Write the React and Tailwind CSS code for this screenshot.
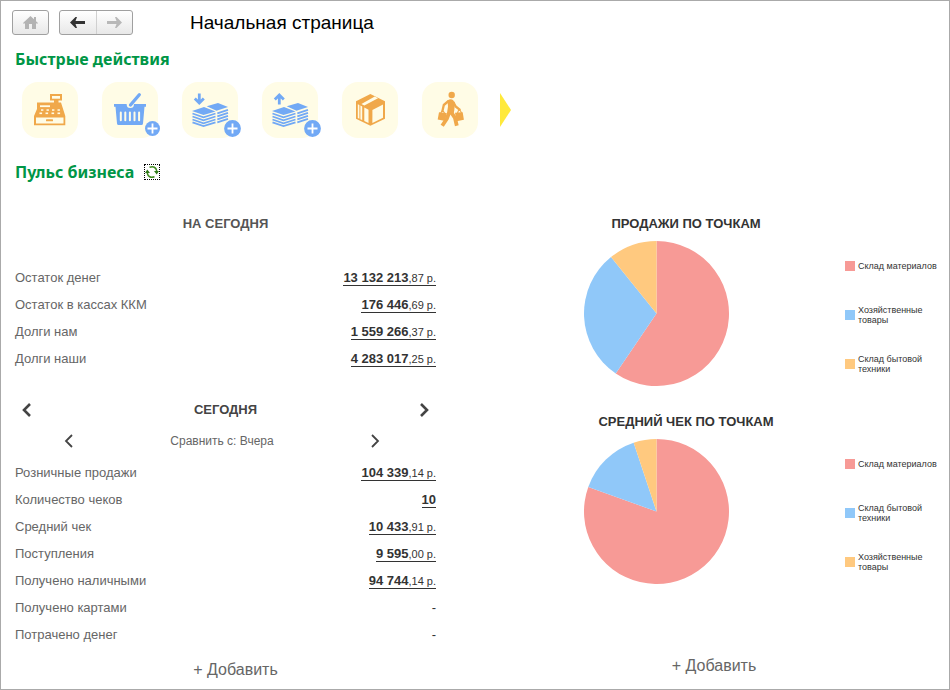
import React from 'react';

// ── Palette ──
const ORANGE = '#f0a84a';
const BLUE = '#72a9f5';
const PALE = '#fffce6';

const SLICE = {
  red: '#f79a96',
  blue: '#90c8f9',
  amber: '#ffc97f',
};

const BALANCES = [
  { label: 'Остаток денег', whole: '13 132 213', cents: ',87 р.' },
  { label: 'Остаток в кассах ККМ', whole: '176 446', cents: ',69 р.' },
  { label: 'Долги нам', whole: '1 559 266', cents: ',37 р.' },
  { label: 'Долги наши', whole: '4 283 017', cents: ',25 р.' },
];

const TODAY = [
  { label: 'Розничные продажи', whole: '104 339', cents: ',14 р.' },
  { label: 'Количество чеков', whole: '10', cents: '' },
  { label: 'Средний чек', whole: '10 433', cents: ',91 р.' },
  { label: 'Поступления', whole: '9 595', cents: ',00 р.' },
  { label: 'Получено наличными', whole: '94 744', cents: ',14 р.' },
  { label: 'Получено картами' },
  { label: 'Потрачено денег' },
];

const SALES = [
  { label: 'Склад материалов', share: 59.5, color: SLICE.red },
  { label: 'Хозяйственные товары', share: 29.7, color: SLICE.blue },
  { label: 'Склад бытовой техники', share: 10.8, color: SLICE.amber },
];

const AVERAGE = [
  { label: 'Склад материалов', share: 80.5, color: SLICE.red },
  { label: 'Склад бытовой техники', share: 14.4, color: SLICE.blue },
  { label: 'Хозяйственные товары', share: 5.1, color: SLICE.amber },
];

// ── Quick action drawings, all on a 56x56 tile ──
function PlusBadge() {
  return (
    <g>
      <circle cx="50.5" cy="46.5" r="7.5" fill={BLUE} />
      <path d="M50.5 41.5v10M45.5 46.5h10" stroke="#fff" strokeWidth="1.8" />
    </g>
  );
}

function RegisterIcon() {
  return (
    <g fill={ORANGE}>
      <path d="M28 12h12v6.500h-3.500v2H39L43.300 34v9.200H12V34l3-7v-6.500h17v-2h-4z" />
      <g fill={PALE}>
        <rect x="30" y="14" width="8" height="2.700" />
        <rect x="18" y="23.300" width="10" height="1.800" />
        <path d="M14 35.500h27.500v6H14z" />
        {[19, 24.5, 30, 35.5].map((x) => <rect key={x} x={x} y="27.300" width="2.400" height="1.500" />)}
        {[17.5, 23.5, 29.5, 35.5].map((x) => <rect key={x} x={x} y="30.500" width="2.600" height="1.600" />)}
      </g>
      <rect x="24" y="37.300" width="7" height="2" rx="0.5" />
    </g>
  );
}

function BasketIcon() {
  return (
    <g>
      <path d="M12 22h32v2.800h-1.500L41 41.500Q40.800 43 39.500 43h-23Q15.200 43 15 41.500L13.500 24.800H12z" fill={BLUE} />
      <circle cx="28.300" cy="22.500" r="3.600" fill={PALE} />
      <path d="M28.500 23L37.300 12.700" stroke={BLUE} strokeWidth="3.300" strokeLinecap="round" />
      <path d="M18.800 30.500v7.800M23.300 30.500v7.800M27.900 30.500v7.800M32.500 30.500v7.800M37.100 30.500v7.800" stroke={PALE} strokeWidth="2" strokeLinecap="round" />
      <PlusBadge />
    </g>
  );
}

function MoneyIcon({ up }) {
  return (
    <g fill="none" stroke={BLUE} strokeWidth="1.800">
      <path d="M10 29l12-4 11.500 4.500L21.500 33z" fill={BLUE} stroke="none" />
      <path d="M24.700 24.200L36 21l10 4-11.500 3.800z" fill={BLUE} stroke="none" />
      <path d="M10.500 31.500L21.500 35.300l12-3.800M10.500 34.500L21.500 38.300l12-3.800M10.500 37.500L21.500 41.300l12-3.800M10.500 40.300L21.500 44.100l12-3.800" />
      <path d="M35.300 31.300L46 27.800M35.300 34.300L46 30.800M35.300 37.300L46 33.800M35.300 40.300L46 36.800" />
      {up
        ? <path d="M17.300 22.500V13.500M12.800 17.500L17.300 13l4.500 4.500" strokeWidth="2.800" />
        : <path d="M17.300 11.500V20.500M12.800 16.500L17.300 21l4.500-4.500" strokeWidth="2.800" />}
      <PlusBadge />
    </g>
  );
}

function BoxIcon() {
  return (
    <g>
      <path d="M28.400 12L43 19.300v17.500l-14.600 7L14 36.800V19.300z" fill={ORANGE} />
      <path d="M30.400 28L41 22.600v13.200L30.400 41z" fill={PALE} />
      <path d="M15.800 22.300l1.600.8v13.600l-1.600-.8zM18.400 23.500l1.800.9v13.700l-1.800-.9z" fill={PALE} />
      <path d="M22.300 25.500l4.200 2.200V41l-4.200-2.100z" fill={PALE} />
      <path d="M32.800 14.500l3.200 1.700-13.700 7.300-2.900-1.500z" fill={PALE} />
    </g>
  );
}

function ShopperIcon() {
  return (
    <g fill={ORANGE}>
      <circle cx="29.700" cy="13" r="3.200" />
      <path d="M25.500 18.500Q28.500 16.500 31 18l2 3-.7 7-.8 4.500h-6.700l1.200-8z" />
      <g fill="none" stroke={ORANGE} strokeLinejoin="round">
        <path d="M26.500 19l-4.700 4-1.600 7" strokeWidth="2.300" />
        <path d="M31.300 20l2.400 4.500 4.600 3.700" strokeWidth="2.300" />
        <path d="M27 31l-2.300 6-4.500 6.700" strokeWidth="3.800" />
        <path d="M29.700 31l3.300 5 1.800 7.700" strokeWidth="3.800" />
        <path d="M18.800 31q1.700-4 3.700 0M35.500 31q1.700-6 4 0" strokeWidth="1.200" />
      </g>
      <path d="M17 30.300l7.700.6-1.500 8-7.500-1.400zM33 30.800l7.700-.5 1.200 7.500-7.400 1.500z" />
    </g>
  );
}

const ACTIONS = [
  { name: 'Касса', icon: <RegisterIcon /> },
  { name: 'Новая продажа', icon: <BasketIcon /> },
  { name: 'Поступление денег', icon: <MoneyIcon /> },
  { name: 'Расход денег', icon: <MoneyIcon up /> },
  { name: 'Товары', icon: <BoxIcon /> },
  { name: 'Покупатели', icon: <ShopperIcon /> },
];

function Chevron({ left, thin, label }) {
  return (
    <button type="button" aria-label={label} className="flex w-4 h-5 items-center justify-center text-[#444]">
      <svg width="10" height="14" viewBox="0 0 10 14" fill="none" stroke="currentColor" strokeWidth={thin ? 1.8 : 2.6}>
        <path d={left ? 'M8 1L2 7l6 6' : 'M2 1l6 6-6 6'} />
      </svg>
    </button>
  );
}

function Metrics({ rows }) {
  return (
    <table className="w-full text-[13px] leading-4">
      <tbody>
        {rows.map((r) => (
          <tr key={r.label} className="h-[27px]">
            <th scope="row" className="p-0 text-left font-normal text-[#666]">{r.label}</th>
            <td className="p-0 text-right text-[#333]">
              {r.whole ? (
                <a href="#" className="inline-block border-b border-[#333] text-[11px] leading-[13px]">
                  <b className="text-[13px]">{r.whole}</b>{r.cents}
                </a>
              ) : '-'}
            </td>
          </tr>
        ))}
      </tbody>
    </table>
  );
}

function Pie({ data }) {
  const point = (pct) => {
    const a = (pct / 100) * Math.PI * 2;
    return `${72.5 + 72.5 * Math.sin(a)} ${72.5 - 72.5 * Math.cos(a)}`;
  };
  let start = 0;
  return (
    <svg width="145" height="145" viewBox="0 0 145 145" className="shrink-0">
      {data.map((d) => {
        const from = start;
        start += d.share;
        return (
          <path key={d.label} fill={d.color}
            d={`M72.5 72.5L${point(from)}A72.5 72.5 0 ${d.share > 50 ? 1 : 0} 1 ${point(start)}Z`} />
        );
      })}
    </svg>
  );
}

function ChartPanel({ title, data }) {
  return (
    <section>
      <h3 className="mb-[9px] pr-[150px] text-center text-[13px] leading-4 font-bold text-[#333]">{title}</h3>
      <div className="flex justify-between">
        <Pie data={data} />
        <ul className="flex w-[93px] flex-col text-[9px] leading-[10px] text-[#333]">
          {data.map((d) => (
            <li key={d.label} className="flex h-[49px] items-center gap-[3px]">
              <span className="size-[10px] shrink-0" style={{ background: d.color }} />
              <span>{d.label}</span>
            </li>
          ))}
        </ul>
      </div>
    </section>
  );
}

export default function App() {
  return (
    <div className="min-h-screen border border-[#aaa] bg-white font-['Liberation_Sans',Arial,sans-serif]">
      {/* Toolbar */}
      <header className="flex items-center pt-[9px] pl-[11px]">
        <button type="button" aria-label="Домой"
          className="flex h-[25px] w-[37px] items-center justify-center rounded-[3px] border border-[#a0a0a0] bg-linear-to-b from-white to-[#e8e8e8]">
          <svg width="15" height="13" viewBox="0 0 15 13" fill="#b3b3b3">
            <path d="M7.500 0L11 3.300V1h2v4.200L15 7v.6h-2V13H9V8H6v5H2V7.600H0V7z" />
          </svg>
        </button>
        <div className="ml-[10px] flex h-[25px] w-[74px] rounded-[3px] border border-[#a0a0a0] bg-linear-to-b from-white to-[#e8e8e8]">
          <button type="button" aria-label="Назад" className="flex flex-1 items-center justify-center border-r border-[#d0d0d0]">
            <svg width="15" height="11" viewBox="0 0 15 11" fill="#333">
              <path d="M0 5.500L5.500 0h1.500L5.500 4H15v3H5.500L7 11H5.500z" />
            </svg>
          </button>
          <button type="button" aria-label="Вперёд" className="flex flex-1 items-center justify-center">
            <svg width="15" height="11" viewBox="0 0 15 11" fill="#b8b8b8">
              <path d="M15 5.500L9.500 0H8l1.500 4H0v3h9.500L8 11h1.500z" />
            </svg>
          </button>
        </div>
        <h1 className="ml-[57px] text-[19px] leading-6 text-black">Начальная страница</h1>
      </header>

      {/* Quick actions */}
      <section className="pt-[12px] pl-[14px]">
        <h2 className="font-['Noto_Sans',sans-serif] text-[16px] leading-6 font-bold text-[#009646]">Быстрые действия</h2>
        <div className="mt-[11px] flex items-center gap-6 pl-[7px]">
          {ACTIONS.map((a) => (
            <button key={a.name} type="button" aria-label={a.name} className="size-14 rounded-2xl bg-[#fffce6]">
              <svg viewBox="0 0 56 56" className="size-14 overflow-visible">{a.icon}</svg>
            </button>
          ))}
          <button type="button" aria-label="Ещё действия" className="-ml-[2px]">
            <svg width="11" height="34" viewBox="0 0 11 34" fill="#ffe93b"><path d="M0 0l11 17L0 34z" /></svg>
          </button>
        </div>
      </section>

      {/* Business pulse */}
      <div className="mt-[22px] flex items-center gap-[10px] pl-[14px]">
        <h2 className="font-['Noto_Sans',sans-serif] text-[16px] leading-6 font-bold text-[#009646]">Пульс бизнеса</h2>
        <button type="button" aria-label="Обновить" className="size-4 border border-dotted border-black">
          <svg width="14" height="14" viewBox="0 0 14 14" fill="none" stroke="#3f8a1f" strokeWidth="1.500">
            <path d="M4.500 2.300Q10.500.3 11.800 6M9.500 11.700Q3.500 13.700 2.200 8" />
            <path d="M9 6h5l-2.300 3.500zM0 8h5L2.300 4.500z" fill="#2f7a18" stroke="none" />
          </svg>
        </button>
      </div>

      <main className="mt-[32px] grid grid-cols-[421fr_354fr] gap-x-[148px] pr-[11px] pl-[14px]">
        <div>
          <h3 className="mb-[32px] text-center text-[13px] leading-4 font-bold text-[#555]">НА СЕГОДНЯ</h3>
          <Metrics rows={BALANCES} />
          <div className="mt-[28px] flex items-center justify-between px-1">
            <Chevron left label="Предыдущий день" />
            <h3 className="text-[13px] leading-4 font-bold text-[#444]">СЕГОДНЯ</h3>
            <Chevron label="Следующий день" />
          </div>
          <div className="mt-[11px] mb-[8px] flex items-center justify-between pr-[53px] pl-[46px] text-[#666]">
            <Chevron left thin label="Предыдущий период" />
            <span className="text-[12px] leading-4">Сравнить с: Вчера</span>
            <Chevron thin label="Следующий период" />
          </div>
          <Metrics rows={TODAY} />
          <div className="mt-[10px] pl-5 text-center">
            <button type="button" className="text-[16px] leading-5 text-[#666]">+ Добавить</button>
          </div>
        </div>

        <div>
          <ChartPanel title="ПРОДАЖИ ПО ТОЧКАМ" data={SALES} />
          <div className="mt-[26px]">
            <ChartPanel title="СРЕДНИЙ ЧЕК ПО ТОЧКАМ" data={AVERAGE} />
          </div>
          <div className="mt-[68px] pr-[94px] text-center">
            <button type="button" className="text-[16px] leading-5 text-[#666]">+ Добавить</button>
          </div>
        </div>
      </main>
    </div>
  );
}
